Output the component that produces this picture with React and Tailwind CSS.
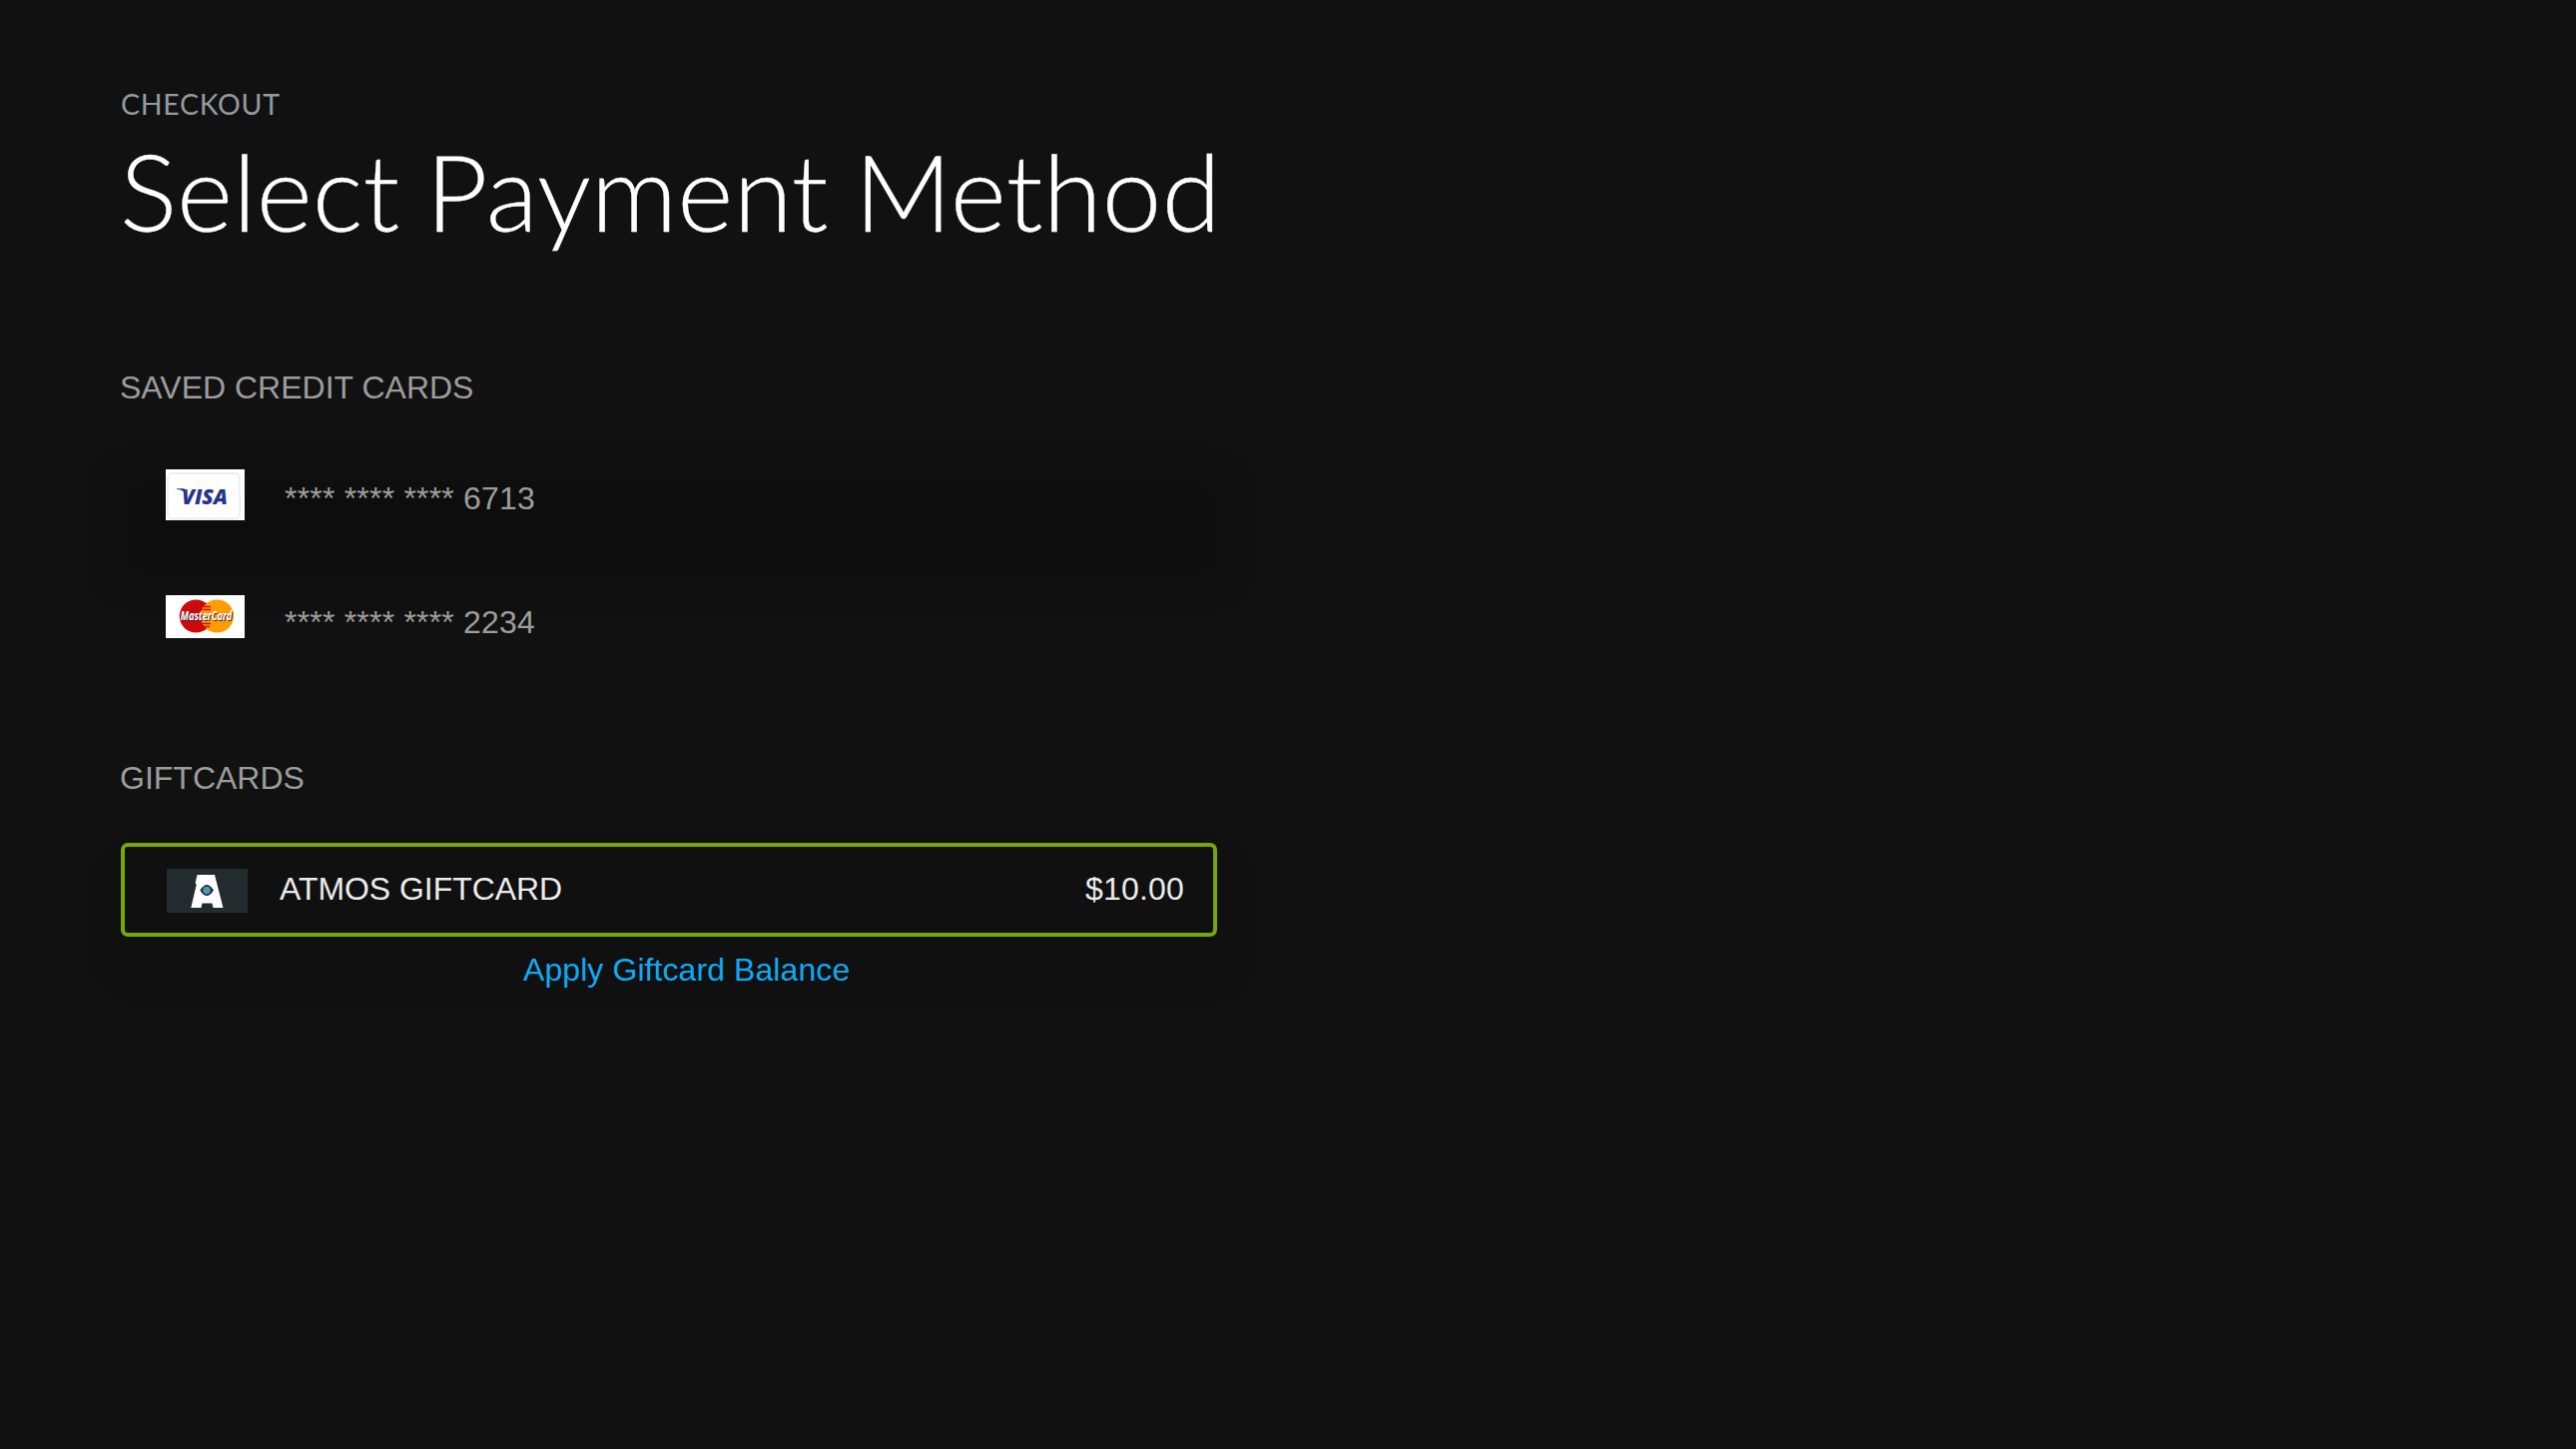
function VisaLogo() {
  return (
    <svg className="block h-[51px] w-[79px]" viewBox="0 0 79 51">
      <rect width="79" height="51" fill="#fff" />
      <rect x="2" y="4" width="72" height="45.5" rx="5" fill="#fff" stroke="#ededf0" strokeWidth="1.8" />
      <path d="M11 19.3H18.5L20.5 24L18 22.5C16.5 21 14 20.3 11 20Z" fill="#27348b" />
      <text x="16" y="35" fontFamily="Open Sans, sans-serif" fontWeight="800" fontStyle="italic" fontSize="21.5" textLength="46" lengthAdjust="spacingAndGlyphs" fill="#27348b">VISA</text>
    </svg>
  );
}

function MasterCardLogo() {
  return (
    <svg className="block h-[43px] w-[79px]" viewBox="0 0 79 43">
      <rect width="79" height="43" fill="#fff" />
      <circle cx="30.3" cy="21" r="16.6" fill="#cc0a0a" />
      <circle cx="51.5" cy="21" r="16.6" fill="#ff9c00" />
      <path d="M38 11.5h7M37 14.5h8M36 28.5h9M37 31.5h7" stroke="#cc0a0a" strokeWidth="1.4" />
      <text x="15.6" y="26.2" fontFamily="Open Sans, sans-serif" fontWeight="700" fontStyle="italic" fontSize="12" textLength="51.5" lengthAdjust="spacingAndGlyphs" fill="#33204a">MasterCard</text>
      <text x="14.8" y="25.4" fontFamily="Open Sans, sans-serif" fontWeight="700" fontStyle="italic" fontSize="12" textLength="51.5" lengthAdjust="spacingAndGlyphs" fill="#fff">MasterCard</text>
    </svg>
  );
}

function AtmosLogo() {
  return (
    <svg className="block h-[44px] w-[81px]" viewBox="0 0 81 44">
      <rect width="81" height="44" fill="#242b2f" />
      <path d="M30.5 6H48L56.5 39H46.5L45.5 34.5H35.5L34.5 39H24.3L29.8 15.5L28.6 14.5Z" fill="#fff" />
      <path d="M33.3 21.5Q40 10.5 47 21.5Q40 32.5 33.3 21.5Z" fill="#20303a" />
      <circle cx="40" cy="21.5" r="3.7" fill="#4a9bb0" />
    </svg>
  );
}

export default function App() {
  return (
    <main className="h-[1451px] w-[2580px] overflow-hidden bg-[#111111] pl-[120px] pt-[90px] font-['Liberation_Sans',Arial,sans-serif] text-[32px] leading-[36px]">
      <header className="h-[280px] font-[Lato,sans-serif]">
        <p className="h-[47px] pl-px text-[28.5px] leading-[28px] tracking-[0.7px] text-[#939ba2]"><span>CHECKOUT</span></p>
        <h1 className="whitespace-nowrap text-[107.5px] font-light leading-[108px] text-white [-webkit-text-stroke:0.3px_white] [word-spacing:-3px]"><span>Select Payment Method</span></h1>
      </header>

      <section className="h-[391px] w-[1100px] text-[#9d9d9d]">
        <h2>SAVED CREDIT CARDS</h2>
        <div className="relative mt-[46px] flex h-[124px] items-start pl-[46px]">
          <div className="absolute left-0 top-[27px] h-[101px] w-[1104px] rounded bg-black/20 blur-[16px]" />
          <div className="relative mt-[18px]"><VisaLogo /></div>
          <span className="relative ml-[40px] mt-[29px] tracking-[0.2px]">**** **** **** 6713</span>
        </div>
        <div className="relative flex h-[124px] items-start pl-[46px]">
          <div className="mt-[20px]"><MasterCardLogo /></div>
          <span className="ml-[40px] mt-[29px] tracking-[0.2px]">**** **** **** 2234</span>
        </div>
      </section>

      <section className="relative w-[1099px]">
        <h2 className="text-[#9d9d9d]">GIFTCARDS</h2>
        <div className="absolute left-0 top-[102px] h-[116px] w-[1110px] rounded bg-black/5 blur-[16px]" />
        <div className="relative ml-px mt-[47px] flex h-[94px] items-center rounded-[7px] border-4 border-[#76a60c] pl-[42px] pr-[29px] text-[#ebebeb]">
          <div className="mt-[2px]"><AtmosLogo /></div>
          <span className="-mt-[2px] ml-[32px] grow tracking-[-0.05px]">ATMOS GIFTCARD</span>
          <span className="-mt-[2px] tracking-[0.2px]">$10.00</span>
        </div>
        <div className="relative mt-[15px] flex pl-[404px] tracking-[0.08px] text-[#10a9f2]"><button>Apply Giftcard Balance</button></div>
      </section>
    </main>
  );
}
